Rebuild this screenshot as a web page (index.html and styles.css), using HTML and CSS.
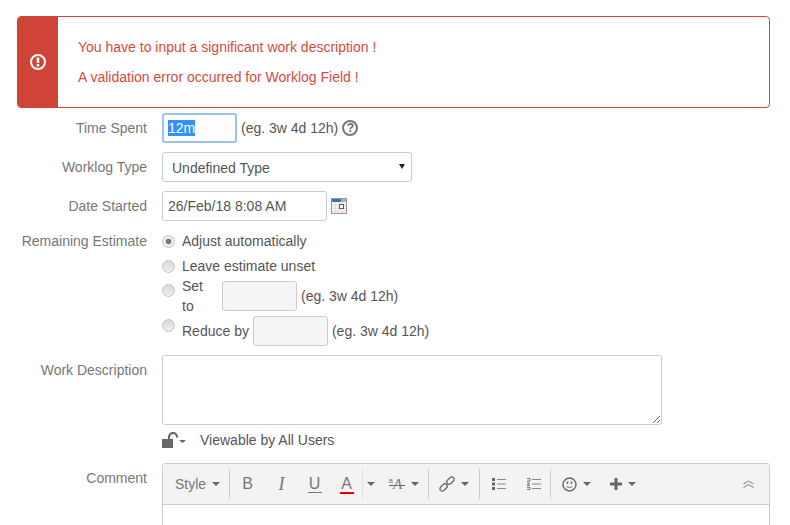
FILE: index.html
```html
<!DOCTYPE html>
<html>
<head>
    <title>Log Work</title>
    <link rel="stylesheet" href="styles.css">
</head>
<body>
    <div class="alert">
        <div class="alert-side">
            <svg width="18" height="18" viewBox="0 0 18 18">
                <circle cx="9" cy="9" r="7" fill="none" stroke="#fff" stroke-width="2"/>
                <rect x="7.7" y="4.6" width="2.6" height="5.4" rx="0.6" fill="#fff"/>
                <rect x="7.7" y="11" width="2.6" height="2.4" rx="0.6" fill="#fff"/>
            </svg>
        </div>
        <div class="alert-body">
            <p>You have to input a significant work description !</p>
            <p>A validation error occurred for Worklog Field !</p>
        </div>
    </div>

    <div class="field">
        <label class="label">Time Spent</label>
        <div class="control">
            <div class="text focused w75"><span class="selected">12m</span></div>
            <span class="hint">(eg. 3w 4d 12h)</span>
            <span class="help">?</span>
        </div>
    </div>

    <div class="field">
        <label class="label">Worklog Type</label>
        <div class="control">
            <div class="select-wrap">
                <select class="select">
                    <option>Undefined Type</option>
                </select>
            </div>
        </div>
    </div>

    <div class="field">
        <label class="label">Date Started</label>
        <div class="control">
            <input class="text date" type="text" value="26/Feb/18 8:08 AM">
            <svg class="cal" width="16" height="16" viewBox="0 0 16 16">
                <rect x="0.5" y="0.5" width="15" height="15" fill="#f6f6f6" stroke="#999"/>
                <rect x="1" y="1" width="9" height="3" fill="#3f6ea8"/>
                <rect x="10" y="1" width="5" height="3" fill="#a9b4c2"/>
                <path d="M1 7.500h14M1 10.500h14M1 13.500h14M4.500 4v11M8 4v11M11.500 4v11" stroke="#e0e0e0" fill="none"/>
                <rect x="8.500" y="6.500" width="4" height="4" fill="#fff" stroke="#c8302a"/>
            </svg>
        </div>
    </div>

    <div class="field field-radios">
        <label class="label">Remaining Estimate</label>
        <div class="radios">
            <div class="radio-row">
                <input class="radio" type="radio" name="est" checked>
                <span>Adjust automatically</span>
            </div>
            <div class="radio-row">
                <input class="radio" type="radio" name="est">
                <span>Leave estimate unset</span>
            </div>
            <div class="radio-row tall">
                <input class="radio" type="radio" name="est">
                <span class="set-to">Set to</span>
                <input class="text w75 blank" type="text">
                <span>(eg. 3w 4d 12h)</span>
            </div>
            <div class="radio-row tall">
                <input class="radio" type="radio" name="est">
                <span>Reduce by</span>
                <input class="text w75 blank" type="text">
                <span>(eg. 3w 4d 12h)</span>
            </div>
        </div>
    </div>

    <div class="field">
        <label class="label">Work Description</label>
        <div>
            <textarea class="area"></textarea>
            <div class="viewable">
                <svg width="25" height="16" viewBox="0 0 25 16">
                    <rect x="0" y="7" width="11" height="9" fill="#666"/>
                    <path d="M7 7V5a4 4 0 0 1 8 0v.5" fill="none" stroke="#666" stroke-width="2.200"/>
                    <path d="M17 8h7l-3.500 3z" fill="#666"/>
                </svg>
                <span>Viewable by All Users</span>
            </div>
        </div>
    </div>

    <div class="field field-comment">
        <label class="label">Comment</label>
        <div class="editor">
            <div class="toolbar">
                <div class="tool w-style">Style <i class="caret"></i></div>
                <b class="sep"></b>
                <div class="tool w35 glyph">B</div>
                <div class="tool w33 glyph italic">I</div>
                <div class="tool w33 glyph"><span class="under">U</span></div>
                <div class="tool w31 glyph"><span class="color">A</span></div>
                <b class="sep light"></b>
                <div class="tool w16"><i class="caret"></i></div>
                <div class="tool w49">
                    <span class="font-size"><span class="small-a">a</span><span class="big-a">A</span></span>
                    <i class="caret"></i>
                </div>
                <b class="sep"></b>
                <div class="tool w50">
                    <svg width="16" height="16" viewBox="0 0 16 16" fill="none" stroke="#666" stroke-width="1.300">
                        <rect x="-4.200" y="-2.400" width="8.400" height="4.800" rx="2.400" transform="translate(4.600 11.400) rotate(-45)"/>
                        <rect x="-4.200" y="-2.400" width="8.400" height="4.800" rx="2.400" transform="translate(11.400 4.600) rotate(-45)"/>
                    </svg>
                    <i class="caret"></i>
                </div>
                <b class="sep"></b>
                <div class="tool w37">
                    <svg width="14" height="12" viewBox="0 0 14 12">
                        <path d="M0 0h3v3H0zM0 4.500h3v3H0zM0 9h3v3H0z" fill="#666"/>
                        <path d="M5 1.500h9M5 6h9M5 10.500h9" stroke="#888"/>
                    </svg>
                </div>
                <div class="tool w33">
                    <svg width="14" height="12" viewBox="0 0 14 12">
                        <path d="M0 .500h3v2.500H0M0 5h3L0 7.500h3M0 9.500h3v2H0" fill="none" stroke="#777"/>
                        <path d="M5 1.500h9M5 6h9M5 10.500h9" stroke="#888"/>
                    </svg>
                </div>
                <b class="sep"></b>
                <div class="tool w51">
                    <svg width="15" height="15" viewBox="0 0 15 15" fill="none" stroke="#666">
                        <circle cx="7.500" cy="7.500" r="6.500" stroke-width="1.400"/>
                        <path d="M4.500 9c1.500 2 4.500 2 6 0"/>
                        <path d="M5.500 4.500v2.500M9.500 4.500v2.500" stroke-width="1.500"/>
                    </svg>
                    <i class="caret"></i>
                </div>
                <div class="tool w42">
                    <svg width="12" height="12" viewBox="0 0 12 12">
                        <path d="M4.500 0h3v4.500H12v3H7.500V12h-3V7.500H0v-3h4.500z" fill="#666"/>
                    </svg>
                    <i class="caret"></i>
                </div>
                <div class="tool w42 collapse">
                    <svg width="11" height="8" viewBox="0 0 11 8" fill="none" stroke="#777">
                        <path d="M.500 4 5.500 1l5 3M.500 7.500l5-3 5 3"/>
                    </svg>
                </div>
            </div>
            <div class="editor-body"></div>
        </div>
    </div>
</body>
</html>
```

FILE: styles.css
```css
html {
    overflow: hidden;
}

body {
    margin: 0;
    padding: 16px 20px 0 17px;
    font-family: "Liberation Sans", Arial, sans-serif;
    font-size: 14px;
    line-height: 20px;
    color: #555;
    background-color: #fff;
}

.alert {
    display: flex;
    border: 1px solid #d04437;
    border-radius: 4px;
    margin-bottom: 5px;
    overflow: hidden;
}

.alert-side {
    width: 40px;
    background-color: #d04437;
    display: flex;
    align-items: center;
    justify-content: center;
}

.alert-body {
    padding: 20px;
    color: #d84a40;
}

.alert-body p {
    margin: 0 0 10px 0;
}

.alert-body p:last-child {
    margin-bottom: 0;
}

.field {
    display: grid;
    grid-template-columns: 130px 1fr;
    column-gap: 15px;
    margin-bottom: 9px;
}

.field-radios {
    margin-top: 10px;
}

.field-comment {
    margin-top: 13px;
    margin-bottom: 0;
}

.label {
    text-align: right;
    color: #777;
    padding-top: 5px;
}

.field-radios .label {
    padding-top: 0;
}

.control {
    display: flex;
    align-items: center;
    height: 30px;
}

.text {
    box-sizing: border-box;
    height: 30px;
    padding: 0 5px;
    border: 1px solid #ccc;
    border-radius: 3px;
    font: inherit;
    color: #555;
    background-color: #fff;
    outline: none;
}

.w75 {
    width: 75px;
}

.date {
    width: 165px;
}

.blank {
    background-color: #f5f5f5;
}

.focused {
    display: flex;
    align-items: center;
    border: 2px solid #9cc2f2;
    padding: 0 4px;
}

.selected {
    background-color: #3390ff;
    color: #fff;
    line-height: 16px;
}

.hint {
    margin-left: 4px;
}

.help {
    box-sizing: border-box;
    width: 16px;
    height: 16px;
    margin-left: 4px;
    border: 2px solid #777;
    border-radius: 50%;
    font-size: 12px;
    font-weight: bold;
    line-height: 12px;
    text-align: center;
    color: #666;
}

.select-wrap {
    position: relative;
}

.select-wrap::after {
    content: "";
    position: absolute;
    top: 12px;
    right: 7px;
    border-left: 3px solid transparent;
    border-right: 3px solid transparent;
    border-top: 5px solid #222;
}

.select {
    display: block;
    appearance: none;
    box-sizing: border-box;
    width: 250px;
    height: 30px;
    padding: 2px 9px 0 9px;
    border: 1px solid #ccc;
    border-radius: 3px;
    font: inherit;
    color: #555;
    background-color: #fff;
}

.cal {
    margin-left: 4px;
}

.radios {
    display: flex;
    flex-direction: column;
    gap: 5px;
}

.radio-row {
    display: flex;
    align-items: center;
    gap: 4px;
    height: 20px;
}

.radio-row.tall {
    height: 30px;
}

.radio {
    appearance: none;
    box-sizing: border-box;
    width: 13px;
    height: 13px;
    margin: 0 3px 0 0;
    border: 1px solid #c4c4c4;
    border-radius: 50%;
    background: linear-gradient(#d8d8d8, #f0f0f0);
}

.radio:checked {
    background: radial-gradient(circle, #777 0 2.500px, #eee 3.200px);
}

.tall .radio {
    align-self: flex-start;
    margin-top: 3px;
}

.set-to {
    width: 36px;
}

.area {
    display: block;
    box-sizing: border-box;
    width: 500px;
    height: 70px;
    border: 1px solid #ccc;
    border-radius: 3px;
    outline: none;
}

.viewable {
    display: flex;
    align-items: center;
    gap: 13px;
    height: 20px;
    margin-top: 5px;
}

.editor {
    border: 1px solid #ccc;
    border-radius: 3px 3px 0 0;
}

.toolbar {
    display: flex;
    align-items: center;
    height: 40px;
    background-color: #f3f3f3;
    border-bottom: 1px solid #ccc;
    color: #777;
}

.tool {
    display: flex;
    align-items: center;
    justify-content: center;
    gap: 6px;
    height: 30px;
    flex: none;
}

.sep {
    flex: none;
    width: 1px;
    height: 30px;
    background-color: #ccc;
}

.sep.light {
    background-color: #ddd;
}

.caret {
    flex: none;
    width: 0;
    height: 0;
    border-left: 4px solid transparent;
    border-right: 4px solid transparent;
    border-top: 4px solid #666;
}

.w-style {
    box-sizing: border-box;
    width: 66px;
    padding-left: 3px;
}

.w16 { width: 16px; }
.w31 { width: 31px; }
.w33 { width: 33px; }
.w35 { width: 35px; }
.w37 { width: 37px; }
.w42 { width: 42px; }
.w49 { width: 49px; }
.w50 { width: 50px; }
.w51 { width: 51px; }

.glyph {
    font-size: 16px;
}

.italic {
    font-family: "Liberation Serif", serif;
    font-style: italic;
    font-size: 18px;
}

.under {
    display: block;
    width: 14px;
    text-align: center;
    line-height: 17px;
    border-bottom: 1px solid #777;
}

.color {
    display: block;
    width: 14px;
    text-align: center;
    line-height: 17px;
    border-bottom: 2px solid #e00000;
}

.font-size {
    display: flex;
    width: 16px;
    line-height: 16px;
    background: linear-gradient(#666, #666) 0 9px / 100% 1px no-repeat;
}

.small-a {
    font-size: 8px;
    line-height: 10px;
}

.big-a {
    font-family: "Liberation Serif", serif;
    font-size: 15px;
    font-style: italic;
}

.collapse {
    margin-left: auto;
}

.editor-body {
    height: 120px;
    background-color: #fff;
}
```
